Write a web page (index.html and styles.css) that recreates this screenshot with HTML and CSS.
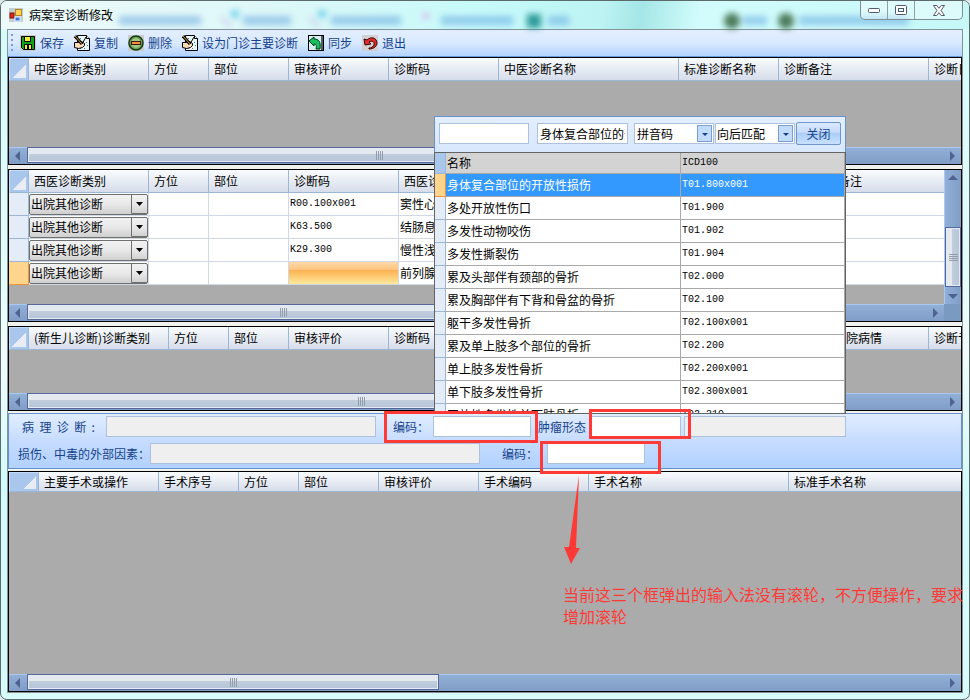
FILE: index.html
```html
<!DOCTYPE html>
<html lang="zh-CN">
<head>
  <meta charset="UTF-8" />
  <meta name="viewport" content="width=device-width, initial-scale=1.0" />
  <title>病案室诊断修改</title>
  <link rel="stylesheet" href="styles.css">
</head>
<body>
  <div class="window">
    <header class="titlebar">
      <svg class="glass" width="960" height="28" aria-hidden="true">
        <g fill="#5a9fe0" opacity="0.5">
          <rect x="112" y="15" width="82" height="9" />
          <rect x="236" y="15" width="48" height="9" />
          <rect x="324" y="15" width="70" height="9" />
          <rect x="434" y="15" width="72" height="9" />
          <rect x="541" y="15" width="21" height="9" />
          <rect x="736" y="15" width="24" height="9" />
          <rect x="792" y="15" width="110" height="9" />
        </g>
        <g fill="#4ec3ea" opacity="0.8">
          <circle cx="228" cy="13" r="4" />
          <circle cx="315" cy="13" r="4" />
        </g>
        <circle cx="419" cy="15" r="3" fill="#e0a8ec" />
        <path d="M214 16l10 10M302 16l10 10" stroke="#c8b8e8" stroke-width="2" />
        <rect x="520" y="13" width="14" height="14" fill="#2f9a9c" />
        <circle cx="725" cy="20" r="8" fill="#4c7b5c" />
        <circle cx="779" cy="20" r="8" fill="#4c7b5c" />
      </svg>
      <svg class="app-icon" width="14" height="14" viewBox="0 0 14 14">
        <rect width="14" height="14" fill="#c3cdd2" />
        <rect x="6.500" y="1.500" width="6" height="6" fill="#ffd454" stroke="#b8861c" />
        <rect x="1" y="5" width="4" height="5" fill="#e02818" stroke="#801008" />
        <rect x="6" y="9" width="5" height="4" fill="#3a78e0" stroke="#e8f0ff" />
      </svg>
      <h1>病案室诊断修改</h1>
      <div class="window-buttons">
        <button type="button" aria-label="最小化">
          <svg width="14" height="8"><rect x="1.500" y="2.500" width="11" height="4" rx="1" fill="#fff" stroke="#54586a" /></svg>
        </button>
        <button type="button" aria-label="还原">
          <svg width="12" height="10"><rect x="0.500" y="0.500" width="11" height="9" rx="1" fill="#fff" stroke="#54586a" /><rect x="3.500" y="3.500" width="5" height="3" fill="#dff" stroke="#54586a" /></svg>
        </button>
        <button type="button" class="wide" aria-label="关闭窗口">
          <svg width="12" height="11" viewBox="0 0 12 11"><path d="M.5.5h3.300L6 3.300 8.200.5h3.300L8 5.500l3.500 5H8.200L6 7.700l-2.200 2.800H.5L4 5.500z" fill="#fff" stroke="#54586a" /></svg>
        </button>
      </div>
    </header>

    <main class="client">
      <nav class="toolbar">
        <span class="grip"></span>
        <button type="button">
          <svg width="16" height="16" viewBox="0 0 16 16"><rect width="16" height="16" fill="#c8ccd0" /><path d="M1.500 1.500h13v13h-11l-2-2z" fill="#12a018" stroke="#000" /><path d="M4.500 1.500h6v5h-6z" fill="#f2f03a" stroke="#000" /><path d="M4.500 9.500h7v5h-7z" fill="#f2f03a" stroke="#000" /><path d="M8 10v4" stroke="#000" stroke-width="2" /></svg>
          保存
        </button>
        <button type="button">
          <svg width="16" height="16" viewBox="0 0 16 16"><path d="M3.500.5h9l3 3v12h-12z" fill="#e8f6f8" stroke="#000" /><path d="M12.500.5v3h3" fill="#fff" stroke="#000" /><path d="M6 13.500h1M12 7.500h1M13 10.500h1M10 13.500h1M6 3.500h1" stroke="#289098" /><path d="M.5 7.500h4l3-1 3 2v2l-2 2-4 1-4-1z" fill="#f8dcb8" stroke="#000" /><path d="M1 1l7 8" stroke="#000" stroke-width="3" /><path d="M1 1l7 8" stroke="#f0a020" /><path d="M12 2L8 9" stroke="#000" /></svg>
          复制
        </button>
        <button type="button">
          <svg width="16" height="16" viewBox="0 0 16 16"><rect width="16" height="16" fill="#c8ccd0" /><circle cx="8" cy="8" r="7" fill="#6c9c5a" stroke="#143c10" stroke-width="1.500" /><circle cx="8" cy="8" r="5" fill="#9cc884" /><rect x="3.500" y="6.500" width="9" height="3" fill="#f09048" stroke="#401808" /></svg>
          删除
        </button>
        <button type="button">
          <svg width="16" height="16" viewBox="0 0 16 16"><path d="M3.500.5h9l3 3v12h-12z" fill="#e8f6f8" stroke="#000" /><path d="M12.500.5v3h3" fill="#fff" stroke="#000" /><path d="M6 13.500h1M12 7.500h1M13 10.500h1M10 13.500h1M6 3.500h1" stroke="#289098" /><path d="M.5 7.500h4l3-1 3 2v2l-2 2-4 1-4-1z" fill="#f8dcb8" stroke="#000" /><path d="M1 1l7 8" stroke="#000" stroke-width="3" /><path d="M1 1l7 8" stroke="#f0a020" /><path d="M12 2L8 9" stroke="#000" /></svg>
          设为门诊主要诊断
        </button>
        <button type="button">
          <svg width="16" height="16" viewBox="0 0 16 16"><rect x="0.500" y="0.500" width="15" height="15" fill="#d8f0f4" stroke="#000" /><path d="M14 1v14" stroke="#506068" stroke-width="2" /><path d="M1 6l5-4v2c5 0 7 3 6 10H8c1-4 0-5-2-5v2z" fill="#18c060" stroke="#003810" /></svg>
          同步
        </button>
        <button type="button">
          <svg width="16" height="16" viewBox="0 0 16 16"><rect width="16" height="16" fill="#d2d0d0" /><path d="M2 4l1 6 6-1-2-2c3-2 6 0 5 3-1 2-3 3-5 3v1c5 0 8-3 8-6 0-5-6-7-10-3z" fill="#e02c2c" stroke="#380808" /></svg>
          退出
        </button>
      </nav>

      <section class="grid grid-tcm">
        <div class="grid-view">
          <table>
            <tr>
              <th class="corner"></th>
              <th class="w120">中医诊断类别</th>
              <th class="w60">方位</th>
              <th class="w80">部位</th>
              <th class="w100">审核评价</th>
              <th class="w110">诊断码</th>
              <th class="w180">中医诊断名称</th>
              <th class="w100">标准诊断名称</th>
              <th class="w150">诊断备注</th>
              <th class="w100">诊断日期</th>
            </tr>
          </table>
        </div>
        <div class="hscroll"><i class="arrow left"></i><div class="track"><div class="thumb t77"></div></div><i class="arrow right"></i></div>
      </section>

      <section class="grid grid-western">
        <div class="grid-main">
          <div class="grid-view">
            <table>
              <tr>
                <th class="corner"></th>
                <th class="w120">西医诊断类别</th>
                <th class="w60">方位</th>
                <th class="w80">部位</th>
                <th class="w110">诊断码</th>
                <th class="w180">西医诊断名称</th>
                <th class="w230"></th>
                <th class="w150">诊断备注</th>
              </tr>
              <tr>
                <td class="rowhead"></td>
                <td class="pick"><select aria-label="诊断类别"><option>出院其他诊断</option></select></td>
                <td></td><td></td><td class="code">R00.100x001</td><td>窦性心律</td><td></td><td></td>
              </tr>
              <tr>
                <td class="rowhead"></td>
                <td class="pick"><select aria-label="诊断类别"><option>出院其他诊断</option></select></td>
                <td></td><td></td><td class="code">K63.500</td><td>结肠息肉</td><td></td><td></td>
              </tr>
              <tr>
                <td class="rowhead"></td>
                <td class="pick"><select aria-label="诊断类别"><option>出院其他诊断</option></select></td>
                <td></td><td></td><td class="code">K29.300</td><td>慢性浅表</td><td></td><td></td>
              </tr>
              <tr>
                <td class="rowhead current"></td>
                <td class="pick"><select aria-label="诊断类别"><option>出院其他诊断</option></select></td>
                <td></td><td></td><td class="editing"></td><td>前列腺</td><td></td><td></td>
              </tr>
            </table>
          </div>
          <div class="vscroll"><i class="arrow up"></i><div class="track"><div class="thumb"></div></div><i class="arrow down"></i></div>
        </div>
        <div class="scroll-row">
          <div class="hscroll"><i class="arrow left"></i><div class="track"><div class="thumb t57"></div></div><i class="arrow right"></i></div>
          <div class="scroll-corner"></div>
        </div>
      </section>

      <section class="grid grid-newborn">
        <div class="grid-view">
          <table>
            <tr>
              <th class="corner"></th>
              <th class="w140">(新生儿诊断)诊断类别</th>
              <th class="w60">方位</th>
              <th class="w60">部位</th>
              <th class="w100">审核评价</th>
              <th class="w110">诊断码</th>
              <th class="w330"></th>
              <th class="w100">出院病情</th>
              <th class="w100">诊断专家</th>
            </tr>
          </table>
        </div>
        <div class="hscroll"><i class="arrow left"></i><div class="track"><div class="thumb t73"></div></div><i class="arrow right"></i></div>
      </section>

      <form class="codes">
        <div class="field-row">
          <label class="pathology" for="pathology">病&nbsp; 理&nbsp; 诊&nbsp; 断&nbsp; :</label>
          <input class="w270" id="pathology" type="text" readonly />
          <label class="code-label" for="path-code">编码：</label>
          <input class="w98" id="path-code" type="text" />
          <label class="tumor" for="tumor">肿瘤形态</label>
          <input class="w90" id="tumor" type="text" />
          <input class="w162" type="text" aria-label="肿瘤形态名称" readonly />
        </div>
        <div class="field-row">
          <label class="injury" for="injury">损伤、中毒的外部因素：</label>
          <input class="w330" id="injury" type="text" readonly />
          <label class="injury-code" for="injury-code">编码：</label>
          <input class="w98" id="injury-code" type="text" />
        </div>
      </form>

      <section class="grid grid-surgery">
        <div class="grid-view">
          <table>
            <tr>
              <th class="corner"></th>
              <th class="w120">主要手术或操作</th>
              <th class="w80">手术序号</th>
              <th class="w60">方位</th>
              <th class="w80">部位</th>
              <th class="w100">审核评价</th>
              <th class="w110">手术编码</th>
              <th class="w200">手术名称</th>
              <th class="w180">标准手术名称</th>
            </tr>
          </table>
        </div>
        <div class="hscroll"><i class="arrow left"></i><div class="track"><div class="thumb t45"></div></div><i class="arrow right"></i></div>
      </section>
    </main>

    <div class="popup">
      <div class="popup-bar">
        <input class="search" type="text" aria-label="检索" />
        <input class="result" type="text" aria-label="名称" value="身体复合部位的开放性损伤" />
        <select class="w80" aria-label="输入方式"><option>拼音码</option></select>
        <select class="w80 match" aria-label="匹配方式"><option>向后匹配</option></select>
        <button type="button">关闭</button>
      </div>
      <div class="popup-list">
        <table>
          <tr><th class="rowhead"></th><th class="name">名称</th><th class="code">ICD100</th></tr>
          <tr class="selected"><td class="rowhead"></td><td>身体复合部位的开放性损伤</td><td class="code">T01.800x001</td></tr>
          <tr><td class="rowhead"></td><td>多处开放性伤口</td><td class="code">T01.900</td></tr>
          <tr><td class="rowhead"></td><td>多发性动物咬伤</td><td class="code">T01.902</td></tr>
          <tr><td class="rowhead"></td><td>多发性撕裂伤</td><td class="code">T01.904</td></tr>
          <tr><td class="rowhead"></td><td>累及头部伴有颈部的骨折</td><td class="code">T02.000</td></tr>
          <tr><td class="rowhead"></td><td>累及胸部伴有下背和骨盆的骨折</td><td class="code">T02.100</td></tr>
          <tr><td class="rowhead"></td><td>躯干多发性骨折</td><td class="code">T02.100x001</td></tr>
          <tr><td class="rowhead"></td><td>累及单上肢多个部位的骨折</td><td class="code">T02.200</td></tr>
          <tr><td class="rowhead"></td><td>单上肢多发性骨折</td><td class="code">T02.200x001</td></tr>
          <tr><td class="rowhead"></td><td>单下肢多发性骨折</td><td class="code">T02.300x001</td></tr>
          <tr><td class="rowhead"></td><td>开放性多发性单下肢骨折</td><td class="code">T02.310</td></tr>
        </table>
      </div>
    </div>

    <!-- review marks -->
    <div class="mark mark-path"></div>
    <div class="mark mark-tumor"></div>
    <div class="mark mark-injury"></div>
    <svg class="mark-arrow" width="18" height="90" viewBox="0 0 18 90"><path d="M15 0L5 72H0l7 17 9-16h-4z" fill="#ff3a36" /></svg>
    <p class="note">当前这三个框弹出的输入法没有滚轮，不方便操作，要求增加滚轮</p>
  </div>
</body>
</html>
```
FILE: styles.css
```css
* {
  box-sizing: border-box;
}
body {
  margin: 0;
  background: #dfe9ec;
  font-family: "Noto Sans CJK SC", sans-serif;
  font-size: 12px;
  line-height: 16px;
  color: #000;
}
input, select, button {
  font: inherit;
  color: inherit;
  margin: 0;
  border-radius: 0;
}
.window {
  position: relative;
  display: flex;
  flex-direction: column;
  min-height: 100vh;
  padding: 0 6px 6px;
  border: 1px solid #5c6a6c;
  border-radius: 7px;
  overflow: hidden;
  background: linear-gradient(#d4fbfb, #e4fcfc 40%, #f2fbfb 50%, #d2fbfb 70%, #d8fbfb);
}

/* title bar */
.titlebar {
  position: relative;
  display: flex;
  align-items: center;
  height: 28px;
  margin: 0 -6px;
  padding-left: 8px;
  background: linear-gradient(100deg, #eefafa 0, #dcf8f8 30%, #c6fafa 50%, #bdf3f3 62%, #a5e6e6 66%, #d2fcfc 72%, #c6f8f8);
}
.glass {
  position: absolute;
  left: 6px;
  top: 0;
  filter: blur(3px);
}
.app-icon {
  position: relative;
}
.titlebar h1 {
  position: relative;
  margin: 0 auto 0 6px;
  font-size: 12px;
  font-weight: 400;
}
.window-buttons {
  position: relative;
  display: flex;
  align-self: flex-start;
  height: 19px;
  margin-right: 6px;
  border: 1px solid #7d8f92;
  border-top: 0;
  border-radius: 0 0 5px 5px;
  background: rgba(255, 255, 255, 0.4);
}
.window-buttons button {
  display: flex;
  align-items: center;
  justify-content: center;
  width: 27px;
  padding: 0;
  border: 0;
  border-right: 1px solid #8fa0a3;
  background: none;
}
.window-buttons .wide {
  width: 47px;
  border-right: 0;
}

.client {
  flex: 1;
  display: flex;
  flex-direction: column;
  border: 1px solid #849496;
  background: #f0f2ee;
}

/* toolbar */
.toolbar {
  display: flex;
  align-items: center;
  gap: 10px;
  height: 27px;
  padding-left: 3px;
  border-bottom: 1px solid #6a9be0;
  background: linear-gradient(#e3efff, #d9e9ff 50%, #b4d3ff);
}
.toolbar .grip {
  width: 2px;
  height: 18px;
  margin-right: -3px;
  background: repeating-linear-gradient(#7a9bd0 0 2px, transparent 2px 5px);
}
.toolbar button {
  display: flex;
  align-items: center;
  gap: 4px;
  padding: 0;
  border: 0;
  background: none;
  color: #15428b;
}

/* grids */
.grid {
  display: flex;
  flex-direction: column;
  border: 1px solid #000;
  background: #ababab;
}
.grid-tcm {
  height: 108px;
  margin-bottom: 4px;
}
.grid-western {
  height: 153px;
  margin-bottom: 4px;
}
.grid-newborn {
  height: 85px;
  margin-bottom: 2px;
}
.grid-surgery {
  flex: 1;
}
.grid-view {
  flex: 1;
  width: 100%;
  min-width: 0;
  overflow: hidden;
}
.grid-main {
  flex: 1;
  display: flex;
  min-height: 0;
}
table {
  table-layout: fixed;
  width: 100%;
  border-collapse: separate;
  border-spacing: 0;
}
th, td {
  height: 23px;
  padding: 0;
  font-weight: 400;
  text-align: left;
  white-space: nowrap;
  overflow: hidden;
}
.grid th {
  padding-left: 5px;
  border-right: 1px solid #9bb7d6;
  border-bottom: 1px solid #9bb7d6;
  background: linear-gradient(#f9fcfd, #d6dcea);
}
.grid th.corner {
  width: 20px;
  border: 1px solid #8db0dd;
  border-color: #c4dcfa #9bb7d6 #9bb7d6 #c4dcfa;
  background: linear-gradient(to bottom right, transparent 50%, #e9ecf2 50%) no-repeat right 2px bottom 2px / 14px 14px, #a9c6ec;
}
.grid-surgery th {
  height: 20px;
}
.grid-surgery th.corner {
  width: 30px;
  background-size: 12px 12px, auto;
}
.grid td {
  padding-left: 1px;
  border-right: 1px solid #d0d7e5;
  border-bottom: 1px solid #d0d7e5;
  background: #fff;
}
.grid td.rowhead {
  border-color: #9bb7d6;
  background: #e4ecf7;
}
.grid td.current {
  border-color: #f29436;
  background: #ffd58d;
}
.grid td.editing {
  background: linear-gradient(#fcd9a8, #fdc480 35%, #fdb050 36%, #fde99a);
}
.grid td.pick {
  padding: 0;
}
.pick select {
  appearance: none;
  display: block;
  width: 119px;
  height: 21px;
  padding: 0 18px 0 1px;
  border: 1px solid #707070;
  border-radius: 2px;
  background: url("data:image/svg+xml,%3Csvg xmlns='http://www.w3.org/2000/svg' width='16' height='19'%3E%3Cpath d='M.5 0v18.500H16' fill='none' stroke='%23707070'/%3E%3Cpath d='M5 7h7L8.500 11z'/%3E%3C/svg%3E") no-repeat right top, linear-gradient(#f2f2f2, #e8e8e8 50%, #cfcfcf);
}
.w60 { width: 60px; }
.w80 { width: 80px; }
.w90 { width: 90px; }
.w98 { width: 98px; }
.w100 { width: 100px; }
.w110 { width: 110px; }
.w120 { width: 120px; }
.w140 { width: 140px; }
.w150 { width: 150px; }
.w162 { width: 162px; }
.w180 { width: 180px; }
.w200 { width: 200px; }
.w230 { width: 230px; }
.w270 { width: 270px; }
.w330 { width: 330px; }
.code {
  font-family: "Liberation Mono", monospace;
  font-size: 10px;
}

/* scrollbars */
.hscroll {
  flex: 1;
  display: flex;
  max-height: 17px;
  min-height: 17px;
  border-top: 1px solid #a9c8f2;
  background: linear-gradient(#92afd6, #7f9dc6);
}
.scroll-row {
  display: flex;
}
.scroll-corner {
  width: 17px;
  background: #7b9ac2;
}
.track {
  flex: 1;
}
.hscroll .thumb {
  height: 16px;
  margin-top: -1px;
  border: 1px solid #56689a;
  background: repeating-linear-gradient(90deg, #949eab 0 1px, transparent 1px 2px) no-repeat center / 7px 9px, linear-gradient(#e4e9ef 40%, #c2cedd 41%, #b5c4d9);
  box-shadow: inset 0 0 0 1px #e4ebf5;
}
.t45 { width: 45%; }
.t57 { width: 57%; }
.t73 { width: 73%; }
.t77 { width: 77%; }
.arrow {
  width: 18px;
  background: #4e6390;
  clip-path: polygon(6px 8px, 11px 3px, 11px 13px);
}
.arrow.right {
  clip-path: polygon(12px 8px, 7px 3px, 7px 13px);
}
.vscroll {
  display: flex;
  flex-direction: column;
  width: 17px;
  flex-shrink: 0;
  border-left: 1px solid #a9c8f2;
  background: linear-gradient(90deg, #92afd6, #7f9dc6);
}
.vscroll .track {
  display: flex;
  align-items: flex-end;
}
.vscroll .thumb {
  width: 16px;
  height: 60px;
  border: 1px solid #56689a;
  background: repeating-linear-gradient(#949eab 0 1px, transparent 1px 2px) no-repeat center / 9px 7px, linear-gradient(90deg, #e4e9ef 40%, #c2cedd 41%, #b5c4d9);
  box-shadow: inset 0 0 0 1px #e4ebf5;
}
.arrow.up, .arrow.down {
  width: 16px;
  height: 17px;
}
.arrow.up {
  clip-path: polygon(8px 5px, 3px 10px, 13px 10px);
}
.arrow.down {
  clip-path: polygon(8px 12px, 3px 7px, 13px 7px);
}

/* code fields */
.codes {
  display: flex;
  flex-direction: column;
  gap: 6px;
  height: 56px;
  margin-bottom: 2px;
  padding-top: 2px;
  border: 1px solid #6593cf;
  background: linear-gradient(#e0edff, #c6dcff 50%, #b1d1ff);
}
.field-row {
  display: flex;
  align-items: center;
  color: #15428b;
}
.field-row input, .popup-bar input, .popup-bar select {
  height: 21px;
  padding: 0 2px;
  border: 1px solid #abc1de;
  background: #fff;
  color: #000;
}
.field-row input:read-only {
  background: #efefef;
}
.field-row label {
  flex-shrink: 0;
}
.pathology {
  width: 97px;
  padding-left: 13px;
}
.code-label {
  width: 57px;
  padding-left: 17px;
}
.tumor {
  width: 60px;
  padding-left: 7px;
}
#tumor {
  margin-right: 3px;
}
.injury {
  width: 141px;
  padding-left: 9px;
}
.injury-code {
  width: 67px;
  padding-left: 22px;
}

/* lookup popup, over the grids */
.popup {
  position: absolute;
  left: 433px;
  top: 115px;
  width: 412px;
}
.popup-bar {
  display: flex;
  align-items: center;
  height: 36px;
  padding: 0 4px 2px;
  border: 1px solid #6593cf;
  border-bottom: 0;
  background: linear-gradient(#e3efff, #d8e7fc);
}
.popup-bar .search {
  width: 90px;
}
.popup-bar .result {
  width: 91px;
  margin: 0 6px 0 8px;
}
.popup-bar select {
  appearance: none;
  background: url("data:image/svg+xml,%3Csvg xmlns='http://www.w3.org/2000/svg' width='16' height='17'%3E%3Crect x='.5' y='.5' width='14' height='16' fill='%23c3dbfa' stroke='%237a9fd4'/%3E%3Cpath d='M5 8h6l-3 3z' fill='%2315428b'/%3E%3C/svg%3E") no-repeat right 1px, #fff;
}
.popup-bar .match {
  margin: 0 1px;
  padding-left: 1px;
}
.popup-bar button {
  width: 45px;
  height: 23px;
  padding: 0;
  border: 1px solid #6f96cb;
  border-radius: 2px;
  background: linear-gradient(#dbe9fd, #c6dcfb 45%, #aaccf8 46%, #c8e0ff);
  color: #15428b;
}
.popup-list {
  height: 262px;
  overflow: hidden;
  border: 1px solid #646464;
  background: #fff;
}
.popup-list th, .popup-list td {
  padding-left: 1px;
  border-right: 1px solid #a9a9a9;
  border-bottom: 1px solid #a9a9a9;
}
.popup-list th {
  height: 21px;
  background: #d3d3d3;
}
.popup-list .name {
  width: 235px;
}
.popup-list .rowhead {
  width: 11px;
  border-color: #9bb7d6;
  background: #e4ecf7;
}
.popup-list th.rowhead {
  background: #a9c6ec;
}
.popup-list .selected td {
  background: #3399ff;
  color: #fff;
}
.popup-list .selected .rowhead {
  border-color: #f29436;
  background: #ffd58d;
}

/* red review marks */
.mark {
  position: absolute;
  border: 3px solid #ff3a36;
}
.mark-path {
  left: 383px;
  top: 410px;
  width: 154px;
  height: 32px;
}
.mark-tumor {
  left: 588px;
  top: 408px;
  width: 102px;
  height: 30px;
}
.mark-injury {
  left: 539px;
  top: 440px;
  width: 121px;
  height: 33px;
}
.mark-arrow {
  position: absolute;
  left: 563px;
  top: 474px;
}
.note {
  position: absolute;
  left: 562px;
  top: 582px;
  width: 402px;
  margin: 0;
  font-size: 16px;
  line-height: 22px;
  color: #ff3a36;
}
```
